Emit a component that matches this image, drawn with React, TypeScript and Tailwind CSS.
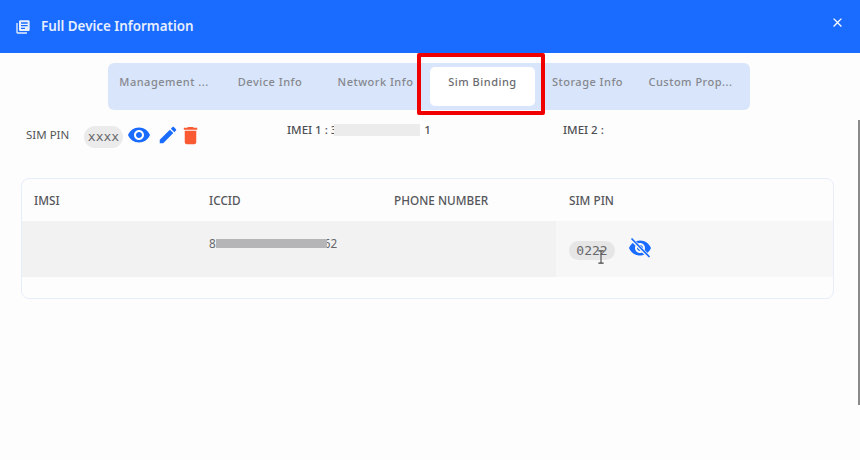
const font = { fontFamily: '"Noto Sans", sans-serif' };

function Ic({ d, className }: { d: string; className: string }) {
  return (
    <svg viewBox="0 0 24 24" fill="currentColor" className={className}>
      <path d={d} />
    </svg>
  );
}

const EYE =
  "M12 4.5C7 4.5 2.73 7.61 1 12c1.73 4.39 6 7.5 11 7.5s9.27-3.11 11-7.5c-1.73-4.39-6-7.5-11-7.5zM12 17c-2.76 0-5-2.24-5-5s2.24-5 5-5 5 2.24 5 5-2.24 5-5 5zm0-8c-1.66 0-3 1.34-3 3s1.34 3 3 3 3-1.34 3-3-1.34-3-3-3z";
const EDIT =
  "M3 17.25V21h3.75L17.81 9.94l-3.75-3.75L3 17.25zM20.71 7.04c.39-.39.39-1.02 0-1.41l-2.34-2.34c-.39-.39-1.02-.39-1.41 0l-1.83 1.83 3.75 3.75 1.83-1.83z";
const TRASH =
  "M6 19c0 1.1.9 2 2 2h8c1.1 0 2-.9 2-2V7H6v12zM19 4h-3.5l-1-1h-5l-1 1H5v2h14V4z";
const LIB =
  "M4 6H2v14c0 1.1.9 2 2 2h14v-2H4V6zm16-4H8c-1.1 0-2 .9-2 2v12c0 1.1.9 2 2 2h12c1.1 0 2-.9 2-2V4c0-1.1-.9-2-2-2zm-1 9H9V9h10v2zm-4 4H9v-2h6v2zm4-8H9V5h10v2z";
const CLOSE =
  "M19 6.41 17.59 5 12 10.59 6.41 5 5 6.41 10.59 12 5 17.59 6.41 19 12 13.41 17.59 19 19 17.59 13.41 12z";

function Tab({ label, w, active }: { label: string; w: string; active?: boolean }) {
  return (
    <div
      className={`${w} flex items-start justify-center pt-[7px] text-[11px] font-medium tracking-[0.5px] leading-[16px] whitespace-nowrap rounded-[5px] ${
        active ? "bg-white text-[#6b6b70]" : "text-[#85888f]"
      }`}
    >
      {label}
    </div>
  );
}

export default function App() {
  return (
    <div className="relative w-[860px] h-[460px] overflow-hidden bg-[#fdfdfd]" style={font}>
      <header className="h-[53px] bg-[#1a6bff] flex items-center pl-[15px] pr-[15px] text-white">
        <Ic d={LIB} className="w-[16px] h-[16px] text-[#e8f0ff]" />
        <span className="ml-[10px] text-[13.4px] font-semibold text-[#e6efff] leading-[20px] mb-[1px]">
          Full Device Information
        </span>
        <Ic d={CLOSE} className="ml-auto w-[15px] h-[15px] mb-[8px]" />
      </header>

      <div className="mx-[108px] mt-[10px] w-[642px] h-[47px] bg-[#d9e5fa] rounded-[6px] flex py-[4px] pl-[2px]">
        <Tab label="Management ..." w="w-[108px]" />
        <Tab label="Device Info" w="w-[104px]" />
        <Tab label="Network Info" w="w-[107px]" />
        <div className="w-[1px]" />
        <Tab label="Sim Binding" w="w-[105px]" active />
        <Tab label="Storage Info" w="w-[105px]" />
        <Tab label="Custom Prop..." w="w-[101px]" />
      </div>

      <section className="flex items-start pl-[26px] mt-[13px] h-[55px] text-[11.5px] text-[#55565a]">
        <div className="w-[58px] leading-[18px] pt-[3px]">SIM PIN</div>
        <div
          className="mt-[3px] w-[39px] h-[22px] rounded-full bg-[#ebebeb] flex items-center justify-center text-[13px] text-[#66676b]"
          style={{ fontFamily: '"DejaVu Sans Mono", monospace' }}
        >
          xxxx
        </div>
        <Ic d={EYE} className="ml-[4px] w-[24px] h-[24px] text-[#1a6bff]" />
        <Ic d={EDIT} className="ml-[6px] mt-[1px] w-[22px] h-[22px] text-[#1a6bff]" />
        <Ic d={TRASH} className="-ml-[0.5px] mt-[0.5px] w-[23px] h-[23px] text-[#fa5a32]" />
        <div className="ml-[85.5px] w-[276px] -mt-[2px] leading-[18px] font-medium text-[#4e4f53]">
          IMEI 1 : 3
          <span className="relative z-10 inline-block -ml-[3px] w-[86px] h-[12px] bg-[#ececec] align-[-2px]" />
          <span className="ml-[4px]">1</span>
        </div>
        <div className="-mt-[2px] leading-[18px] font-medium text-[#4e4f53]">IMEI 2 :</div>
      </section>

      <div className="mx-[21px] w-[813px] h-[121px] border border-[#e6eefa] rounded-[8px] overflow-hidden text-[11.75px] text-[#55565a]">
        <div className="grid grid-cols-[174px_185px_175px_1fr] h-[42px] items-center font-medium pt-[1px]">
          <div className="pl-[12px]">IMSI</div>
          <div className="pl-[13px]">ICCID</div>
          <div className="pl-[13px]">PHONE NUMBER</div>
          <div className="pl-[13px]">SIM PIN</div>
        </div>
        <div className="grid grid-cols-[174px_185px_175px_1fr] h-[56px]">
          <div className="bg-[#f2f2f2]" />
          <div className="bg-[#f2f2f2] pl-[13px] pt-[13px] leading-[18px] text-[#66676b]">
            8
            <span className="relative z-10 inline-block w-[111px] h-[9px] bg-[#b5b5b7] align-[0px]" />
            <span className="-ml-[3px]">62</span>
          </div>
          <div className="bg-[#f2f2f2]" />
          <div className="bg-[#f7f7f7] pl-[13px] pt-[20px] flex items-start">
            <div
              className="w-[46px] h-[19px] rounded-full bg-[#e6e6e6] flex items-center justify-center text-[13px] text-[#66676b]"
              style={{ fontFamily: '"DejaVu Sans Mono", monospace' }}
            >
              0222
            </div>
            <svg viewBox="0 0 24 24" className="ml-[13px] -mt-[5px] w-[24px] h-[24px] text-[#1a6bff]" fill="currentColor">
              <path d={EYE} />
              <path d="M3 2.5 21 21" stroke="#f7f7f7" strokeWidth="3.6" />
              <path d="M3.5 2.5 21.5 21" stroke="currentColor" strokeWidth="1.7" />
            </svg>
          </div>
        </div>
      </div>

      {/* text cursor over the PIN */}
      <svg viewBox="0 0 8 16" className="absolute left-[597px] top-[250px] w-[8px] h-[14px] text-[#444]" fill="none" stroke="currentColor" strokeWidth="1.2">
        <path d="M1 1h6M4 1v14M1 15h6" />
      </svg>

      {/* red highlight annotation */}
      <div className="absolute left-[417px] top-[53px] w-[128px] h-[62px] border-[4px] border-[#f00000] rounded-[2px]" />

      {/* scrollbar edge */}
      <div className="absolute left-[858px] top-[120px] w-[2px] h-[285px] bg-[#8a8a8a]" />
    </div>
  );
}
